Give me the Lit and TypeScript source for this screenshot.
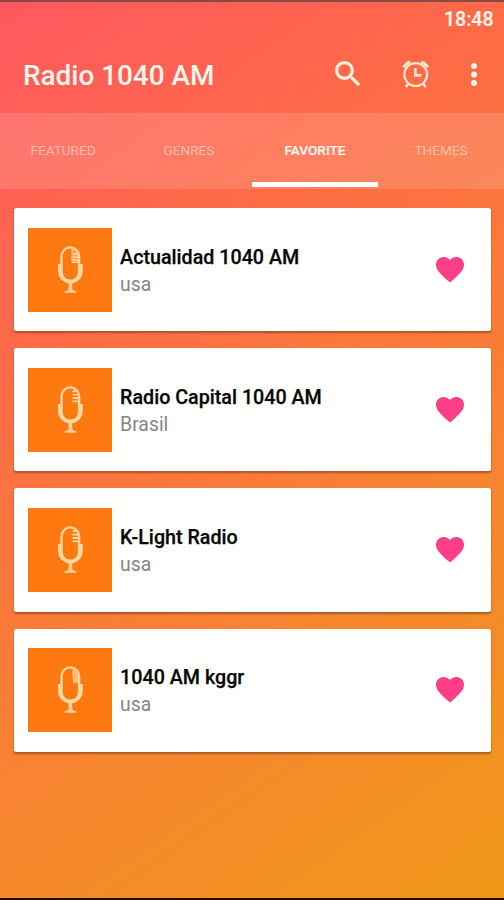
import { LitElement, html, svg, css } from "lit";
import { customElement, property } from "lit/decorators.js";

interface Station {
  name: string;
  place: string;
  grille: "block" | "lines" | "shade";
}

const stations: Station[] = [
  { name: "Actualidad 1040 AM", place: "usa", grille: "block" },
  { name: "Radio Capital 1040 AM", place: "Brasil", grille: "lines" },
  { name: "K-Light Radio", place: "usa", grille: "lines" },
  { name: "1040 AM kggr", place: "usa", grille: "shade" },
];

const tabs = ["FEATURED", "GENRES", "FAVORITE", "THEMES"];

const grilles = {
  block: svg`<path d="M44 20.5v14h6v-8q0-4-6-6z" fill="#ffa04c" stroke="#ffd5a2" stroke-width="1"/><path d="M45 26h5M45 29h5M45 32h5" stroke="#ffd5a2" stroke-width="1.3"/>`,
  lines: svg`<path d="M44.5 23.2h5M44.5 26.6h5.5M44.5 30h5.5M44.5 33.4h5.5" stroke="#ffd5a2" stroke-width="1.8"/>`,
  shade: svg`<path d="M44 20q6 1.5 6 8v7h-5z" fill="#ffbd78"/>`,
};

@customElement("station-card")
export class StationCard extends LitElement {
  @property({ attribute: false }) station!: Station;

  static styles = css`
    :host {
      display: flex;
      align-items: center;
      box-sizing: border-box;
      height: 123.2px;
      padding: 0 27px 0 14px;
      background: #fffffe;
      border-radius: 2.5px;
      box-shadow: 0 1.5px 2px rgba(90, 50, 30, 0.5);
    }
    .cover {
      width: 84px;
      height: 84px;
      flex: none;
      background: #ff7911;
    }
    .text {
      flex: 1;
      padding: 2px 0 0 7.7px;
      white-space: nowrap;
    }
    .name {
      font-size: 19.7px;
      line-height: 27px;
      font-weight: 500;
      color: #070707;
      -webkit-text-stroke: 0.25px #070707;
    }
    .place {
      font-size: 19.4px;
      line-height: 27px;
      color: #858585;
    }
    .heart {
      width: 28px;
      height: 25.5px;
      flex: none;
    }
  `;

  render() {
    return html`
      <svg class="cover" viewBox="0 0 84 84">
        <rect x="33.5" y="19.4" width="17.6" height="33.6" rx="8.8" fill="none" stroke="#ffd5a2" stroke-width="2.4"/>
        <path d="M31.800 36v7a10.600 10.600 0 0 0 21.200 0v-7" fill="none" stroke="#ffd5a2" stroke-width="3.600"/>
        <path d="M40.600 54.500h3.600v6q0 2 3.900 2.600v1.600h-11.400v-1.600q3.900-.6 3.900-2.600z" fill="#ffcf98"/>
        ${grilles[this.station.grille]}
      </svg>
      <div class="text">
        <div class="name">${this.station.name}</div>
        <div class="place">${this.station.place}</div>
      </div>
      <svg class="heart" viewBox="2 3 20 18.35" preserveAspectRatio="none">
        <path fill="#fe3f87" d="M12 21.35l-1.45-1.32C5.4 15.36 2 12.28 2 8.5 2 5.42 4.42 3 7.5 3c1.74 0 3.41.81 4.5 2.09C13.09 3.81 14.76 3 16.5 3 19.58 3 22 5.42 22 8.5c0 3.78-3.4 6.86-8.55 11.54z"/>
      </svg>
    `;
  }
}

@customElement("app-root")
export class AppRoot extends LitElement {
  static styles = css`
    :host {
      display: flex;
      flex-direction: column;
      box-sizing: border-box;
      width: 504px;
      height: 900px;
      overflow: hidden;
      border-top: 2px solid #8b4844;
      border-bottom: 2px solid #1c0c04;
      background: linear-gradient(145deg, #ff5860 0%, #fe6a48 28%, #f88232 62%, #f09819 100%);
      background-origin: border-box;
      font-family: Roboto, sans-serif;
      color: #fff5ec;
    }
    .status {
      height: 35px;
      box-sizing: border-box;
      padding: 6px 10.5px 0 0;
      text-align: right;
      font-size: 19.5px;
      line-height: 23px;
      font-weight: 500;
      -webkit-text-stroke: 0.2px #fff5ec;
    }
    .bar {
      height: 76px;
      display: flex;
      align-items: center;
      padding: 0 13px 0 23px;
    }
    .title {
      flex: 1;
      font-size: 27.9px;
      font-weight: 500;
      white-space: nowrap;
    }
    .icon {
      width: 34px;
      height: 34px;
      flex: none;
      margin-left: 34px;
      margin-top: -2px;
    }
    .icon.search {
      stroke: #fff0df;
      stroke-width: 0.3;
    }
    .icon.more {
      margin-left: 24px;
    }
    .tabs {
      height: 76px;
      flex: none;
      display: grid;
      grid-template-columns: repeat(4, 1fr);
      background: rgba(255, 255, 255, 0.14);
    }
    .tab {
      display: flex;
      align-items: center;
      justify-content: center;
      box-sizing: border-box;
      font-size: 13.6px;
      padding-top: 5px;
      border-bottom: 5.5px solid transparent;
      margin-bottom: 2px;
      color: rgba(255, 231, 213, 0.62);
    }
    .tab.active {
      color: #fff7ef;
      font-weight: 500;
      -webkit-text-stroke: 0.2px #fff7ef;
      border-bottom-color: #fff;
    }
    .list {
      display: flex;
      flex-direction: column;
      gap: 17px;
      padding: 19px 13px 0 14.4px;
    }
  `;

  render() {
    return html`
      <div class="status">18:48</div>
      <div class="bar">
        <div class="title">Radio 1040 AM</div>
        <svg class="icon search" viewBox="0 0 24 24" fill="#fff0df">
          <path d="M15.5 14h-.79l-.28-.27C15.41 12.59 16 11.11 16 9.5 16 5.91 13.09 3 9.5 3S3 5.91 3 9.5 5.91 16 9.5 16c1.61 0 3.09-.59 4.23-1.57l.27.28v.79l5 4.99L20.49 19l-4.99-5zm-6 0C7.01 14 5 11.99 5 9.5S7.01 5 9.5 5 14 7.01 14 9.5 11.99 14 9.5 14z"/>
        </svg>
        <svg class="icon" viewBox="0 0 34 34" fill="none" stroke="#ffe6cb" stroke-width="2.2">
          <circle cx="16.700" cy="17.600" r="11.4"/>
          <path d="M16.4 11v7.400h6" stroke-width="2.6"/>
          <path d="M4.600 10.400q2-4 6.600-5.600M28.800 10.400q-2-4-6.600-5.600" stroke-width="2.8"/>
          <path d="M9.400 26.400l-2.600 3.600M24 26.400l2.600 3.600" stroke-width="2.6"/>
        </svg>
        <svg class="icon more" viewBox="0 0 34 34" fill="#fff5ea">
          <circle cx="17" cy="9" r="3"/>
          <circle cx="17" cy="17.6" r="3"/>
          <circle cx="17" cy="26.1" r="3"/>
        </svg>
      </div>
      <div class="tabs">
        ${tabs.map((t) => html`<div class="tab ${t === "FAVORITE" ? "active" : ""}">${t}</div>`)}
      </div>
      <div class="list">
        ${stations.map((s) => html`<station-card .station=${s}></station-card>`)}
      </div>
    `;
  }
}
